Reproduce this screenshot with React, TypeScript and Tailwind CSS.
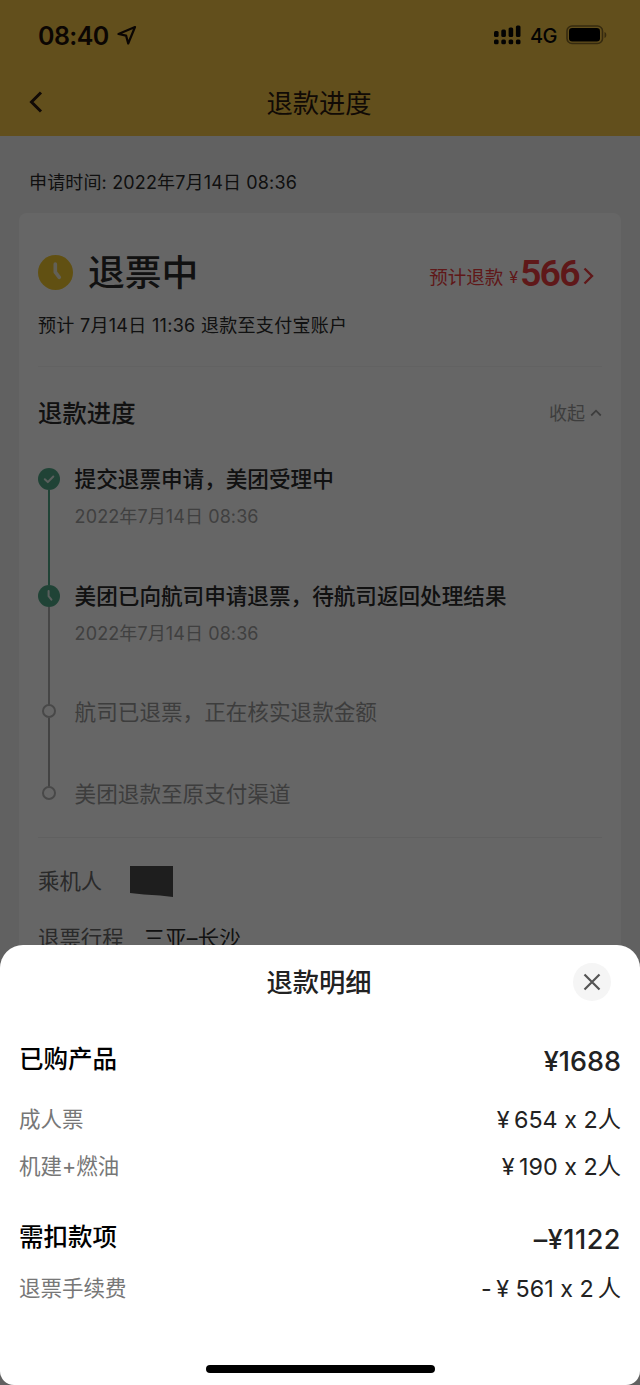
import React from 'react';

type StepState = 'done' | 'active' | 'pending';

interface Step {
  title: string;
  time?: string;
  state: StepState;
  height: string;
  line?: string;
}

const steps: Step[] = [
  { title: '提交退票申请，美团受理中', time: '2022年7月14日 08:36', state: 'done', height: 'h-[117px]', line: 'w-[2px] bg-[#52a888] -mb-[4px]' },
  { title: '美团已向航司申请退票，待航司返回处理结果', time: '2022年7月14日 08:36', state: 'active', height: 'h-[116px]', line: 'w-[1.5px] bg-[#b0b0b0] -mb-[8px]' },
  { title: '航司已退票，正在核实退款金额', state: 'pending', height: 'h-[82px]', line: 'w-[1.5px] bg-[#a8a8a8] -mb-[8px]' },
  { title: '美团退款至原支付渠道', state: 'pending', height: 'h-[30px]' },
];

function StatusBar() {
  return (
    <div className="flex h-[70px] items-center justify-between pl-[38px] pr-[33px] text-[#1c1008]">
      <div className="flex items-center">
        <span className="w-[71px] whitespace-nowrap pt-px text-[25px] font-semibold leading-[30px] tracking-[-0.6px]">08:40</span>
        <svg className="ml-[8px]" width="20" height="20" viewBox="0 0 20 20" fill="none" stroke="currentColor" strokeWidth="2.2" strokeLinejoin="round">
          <path d="M18 2 1.5 9l7.6 1.6L11.2 18.5z" />
        </svg>
      </div>
      <div className="flex items-center text-[#080808]">
        <svg width="27" height="20" viewBox="0 0 27 20" fill="currentColor">
          <rect x="0" y="6" width="4.6" height="6" rx="1.5" />
          <rect x="7.3" y="4.5" width="4.6" height="7.5" rx="1.5" />
          <rect x="14.6" y="2.5" width="4.6" height="9.5" rx="1.5" />
          <rect x="21.9" y="0.5" width="4.6" height="11.5" rx="1.5" />
          <rect x="0" y="14.5" width="4.6" height="4.8" rx="1.5" />
          <rect x="7.3" y="14.5" width="4.6" height="4.8" rx="1.5" />
          <rect x="14.6" y="14.5" width="4.6" height="4.8" rx="1.5" />
          <rect x="21.9" y="14.5" width="4.6" height="4.8" rx="1.5" />
        </svg>
        <span className="ml-[9px] w-[28px] pt-px text-[20px] font-medium leading-[30px] tracking-[-0.6px]">4G</span>
        <svg className="ml-[8px]" width="41" height="20" viewBox="0 0 41 20">
          <rect x="1" y="1" width="35.5" height="17.5" rx="5" fill="none" stroke="#856a26" strokeWidth="1.6" />
          <rect x="3" y="3" width="31" height="13.5" rx="3.2" fill="#000" />
          <path d="M38.5 7v6c1.2-.4 1.8-1.5 1.8-3s-.6-2.6-1.8-3z" fill="#856a26" />
        </svg>
      </div>
    </div>
  );
}

function Marker({ state }: { state: StepState }) {
  if (state === 'pending') {
    return <div className="mt-[7px] size-[14px] shrink-0 rounded-full border-2 border-[#b4b4b4]" />;
  }
  return (
    <svg className="mt-[4px] shrink-0" width="22" height="22" viewBox="0 0 22 22" fill="none" strokeLinecap="round" strokeLinejoin="round">
      <circle cx="11" cy="11" r="11" fill="#52a888" />
      {state === 'done' ? (
        <path d="M6.8 11.3l3 2.8 5.5-5.6" stroke="#e0eee8" strokeWidth="2" />
      ) : (
        <path d="M10.6 6v5.2l2.8 3.5" stroke="#e0eee8" strokeWidth="2" />
      )}
    </svg>
  );
}

function DetailRow({ label, children, className }: { label: string; children: React.ReactNode; className: string }) {
  return (
    <div className={`flex h-[30px] items-center justify-between ${className}`}>
      <span className="text-[21.5px] text-[#777]">{label}</span>
      <span className="whitespace-pre pt-[2px] text-[23.3px] text-[#222]">{children}</span>
    </div>
  );
}

function TotalRow({ label, value, className, valueClassName }: { label: string; value: string; className: string; valueClassName: string }) {
  return (
    <div className={`flex h-[30px] items-center justify-between ${className}`}>
      <span className="text-[24.5px] font-medium text-black">{label}</span>
      <span className={`pt-[6px] text-[27px] font-[550] text-[#222] ${valueClassName}`}>{value}</span>
    </div>
  );
}

export default function App() {
  return (
    <div className="relative h-[1385px] w-[640px] overflow-hidden bg-[#f3f3f3] font-['Inter','Noto_Sans_CJK_SC',sans-serif] [font-feature-settings:'calt'_0]" lang="zh-CN">
      <header className="h-[136px] bg-[#f6c546]">
        <StatusBar />
        <div className="grid h-[64px] grid-cols-[1fr_auto_1fr] items-center px-[28px] text-[#2b1a10]">
          <svg width="16" height="24" viewBox="0 0 16 24" fill="none" stroke="currentColor" strokeWidth="3">
            <path d="M13 2.5 3.5 12 13 21.5" />
          </svg>
          <h1 className="-ml-[2px] pt-[3px] text-[26.3px] font-normal leading-[36px]">退款进度</h1>
        </div>
      </header>

      <p className="pb-[15px] pl-[29px] pt-[32px] text-[18px] leading-[30px] tracking-[0.15px] text-[#2a2a2a]">申请时间: 2022年7月14日 08:36</p>

      <main className="mx-[19px] h-[800px] rounded-[8px] bg-white px-[19px] pt-[39px]">
        <div className="flex h-[40px] items-center">
          <svg width="35" height="35" viewBox="0 0 35 35" fill="none">
            <circle cx="17.5" cy="17.5" r="17.5" fill="#f2c92e" />
            <path d="M17.3 9v8.2l4 5.2" stroke="#f6efd9" strokeWidth="3.6" strokeLinecap="round" strokeLinejoin="round" />
          </svg>
          <h2 className="ml-[15px] pt-[2px] text-[36.8px] font-medium leading-[40px] text-[#2b2b2b]">退票中</h2>
          <div className="ml-auto flex items-center pr-[8px] text-[#ee3d40]">
            <span className="pt-[9px] text-[18.5px] leading-[30px]">预计退款</span>
            <span className="ml-[6px] pt-[9px] text-[16px] leading-[30px]">¥</span>
            <span className="ml-[2px] w-[57px] pt-[2px] font-['Roboto',sans-serif] text-[37.5px] font-semibold leading-[40px] tracking-[-1.8px]">566</span>
            <svg className="ml-[6px] mt-[8px]" width="11" height="18" viewBox="0 0 11 18" fill="none" stroke="currentColor" strokeWidth="2.4">
              <path d="M1.5 1.5 9 9l-7.5 7.5" />
            </svg>
          </div>
        </div>
        <p className="mt-[19px] text-[18px] leading-[30px] tracking-[0.3px] text-[#2b2b2b]">预计 7月14日 11:36 退款至支付宝账户</p>
        <div className="mt-[25px] h-px bg-[#f5f5f5]" />

        <div className="mt-[31px] flex h-[30px] items-center justify-between">
          <h3 className="text-[24.4px] font-medium text-[#2b2b2b]">退款进度</h3>
          <button className="flex items-center pt-px text-[18px] text-[#9a9a9a]">
            收起
            <svg className="-mt-[2px] ml-[5px]" width="12" height="8" viewBox="0 0 12 8" fill="none" stroke="currentColor" strokeWidth="1.8">
              <path d="M1.2 6.5 6 1.7l4.8 4.8" />
            </svg>
          </button>
        </div>

        <ol className="mt-[36px]">
          {steps.map((s) => (
            <li key={s.title} className={`flex ${s.height}`}>
              <div className="flex w-[22px] flex-col items-center">
                <Marker state={s.state} />
                {s.line && <div className={`flex-1 ${s.line}`} />}
              </div>
              <div className="ml-[14.6px]">
                <p className={`text-[21.6px] leading-[30px] ${s.state === 'pending' ? 'text-[#9a9a9a]' : 'font-medium text-[#2b2b2b]'}`}>{s.title}</p>
                {s.time && <p className="mt-[8px] text-[18px] leading-[30px] tracking-[0.1px] text-[#a0a0a0]">{s.time}</p>}
              </div>
            </li>
          ))}
        </ol>

        <div className="mt-[28px] h-px bg-[#f1f1f1]" />
        <div className="mt-[28px] flex h-[30px] items-center text-[21.4px]">
          <span className="text-[#6a6a6a]">乘机人</span>
          <svg className="ml-[28px]" width="43" height="32" viewBox="0 0 43 32">
            <path d="M0 1h43v31L30 30.5 14 29.5 0 28z" fill="#4b4b4b" />
          </svg>
        </div>
        <div className="mt-[27px] flex h-[30px] items-center text-[21.4px]">
          <span className="text-[#6a6a6a]">退票行程</span>
          <span className="ml-[20px] tracking-[0.2px] text-[#2b2b2b]">三亚–长沙</span>
        </div>
      </main>

      <div className="absolute inset-0 bg-black/60" />

      <section className="absolute inset-x-0 bottom-0 h-[440px] rounded-b-[14px] rounded-t-[23px] bg-white px-[19px] pt-[18px]">
        <div className="grid h-[38px] grid-cols-[1fr_auto_1fr] items-center pl-[10px] pr-[10px]">
          <h2 className="col-start-2 -ml-[2px] pt-[2px] text-[26.3px] font-medium leading-[36px] text-[#222]">退款明细</h2>
          <button className="flex size-[38px] items-center justify-center justify-self-end rounded-full bg-[#f5f5f5]">
            <svg width="18" height="18" viewBox="0 0 18 18" fill="none" stroke="#555" strokeWidth="2.2">
              <path d="M1.5 1.5l15 15M16.5 1.5l-15 15" />
            </svg>
          </button>
        </div>
        <TotalRow className="mt-[43px]" label="已购产品" value="¥1688" valueClassName="tracking-[0px]" />
        <DetailRow className="mt-[30px]" label="成人票">
          <span className="[word-spacing:-2px]">¥ </span>654 x 2人
        </DetailRow>
        <DetailRow className="mt-[17px]" label="机建+燃油">
          <span className="[word-spacing:-2px]">¥ </span>190 x 2人
        </DetailRow>
        <TotalRow className="mt-[41px]" label="需扣款项" value="–¥1122" valueClassName="tracking-[0.5px]" />
        <DetailRow className="mt-[21px]" label="退票手续费">
          <span className="[word-spacing:-2px]">- </span>¥ 561 x 2<span className="ml-[4px]">人</span>
        </DetailRow>
        <div className="mx-auto mt-[62px] h-[8px] w-[229px] rounded-full bg-black" />
      </section>
    </div>
  );
}
